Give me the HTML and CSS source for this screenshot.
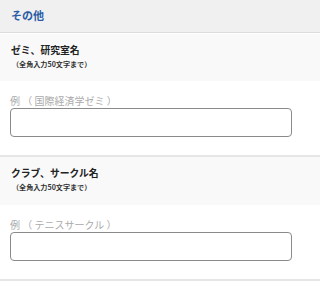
FILE: index.html
```html
<!DOCTYPE html>
<html lang="ja">
<head>
<meta charset="utf-8">
<link rel="stylesheet" href="styles.css">
</head>
<body>
<div class="header"><span class="title">その他</span></div>
<div class="section">
  <div class="label-block">
    <div class="label">ゼミ、研究室名</div>
    <div class="sub">（全角入力50文字まで）</div>
  </div>
  <div class="body">
    <div class="placeholder">例 （ 国際経済学ゼミ ）</div>
    <div class="input"></div>
  </div>
</div>
<div class="section">
  <div class="label-block">
    <div class="label">クラブ、サークル名</div>
    <div class="sub">（全角入力50文字まで）</div>
  </div>
  <div class="body">
    <div class="placeholder">例 （ テニスサークル ）</div>
    <div class="input"></div>
  </div>
</div>
</body>
</html>
```
FILE: styles.css
```css
html, body {
  margin: 0;
  padding: 0;
  background: #ffffff;
  font-family: "Noto Sans CJK JP", "Noto Sans", sans-serif;
}
.header {
  height: 32px;
  background: #f0f0f0;
  border-bottom: 1px solid #dcdcdc;
  display: flex;
  align-items: center;
  padding-left: 11px;
}
.title {
  font-size: 11px;
  font-weight: bold;
  color: #2a5ca6;
  line-height: 14px;
  margin-top: -2px;
}
.section {
  border-bottom: 2px solid #e6e6e6;
}
.label-block {
  background: #f9f9f9;
  border-top: 1px solid #ffffff;
  height: 48px;
  box-sizing: border-box;
  padding: 9px 11px 0;
}
.section + .section .label-block {
  border-top: none;
}
.label {
  font-size: 9.8px;
  font-weight: bold;
  color: #222222;
  line-height: 14px;
}
.sub {
  font-size: 7.1px;
  font-weight: bold;
  color: #333333;
  line-height: 10px;
  margin-top: 2px;
  padding-left: 1px;
}
.body {
  padding: 13px 0 18px 10px;
}
.placeholder {
  font-size: 10px;
  color: #aaaaaa;
  line-height: 14px;
}
.input {
  width: 282px;
  height: 29px;
  box-sizing: border-box;
  border: 1.5px solid #8a8a8a;
  border-radius: 4px;
  background: #ffffff;
}
```
